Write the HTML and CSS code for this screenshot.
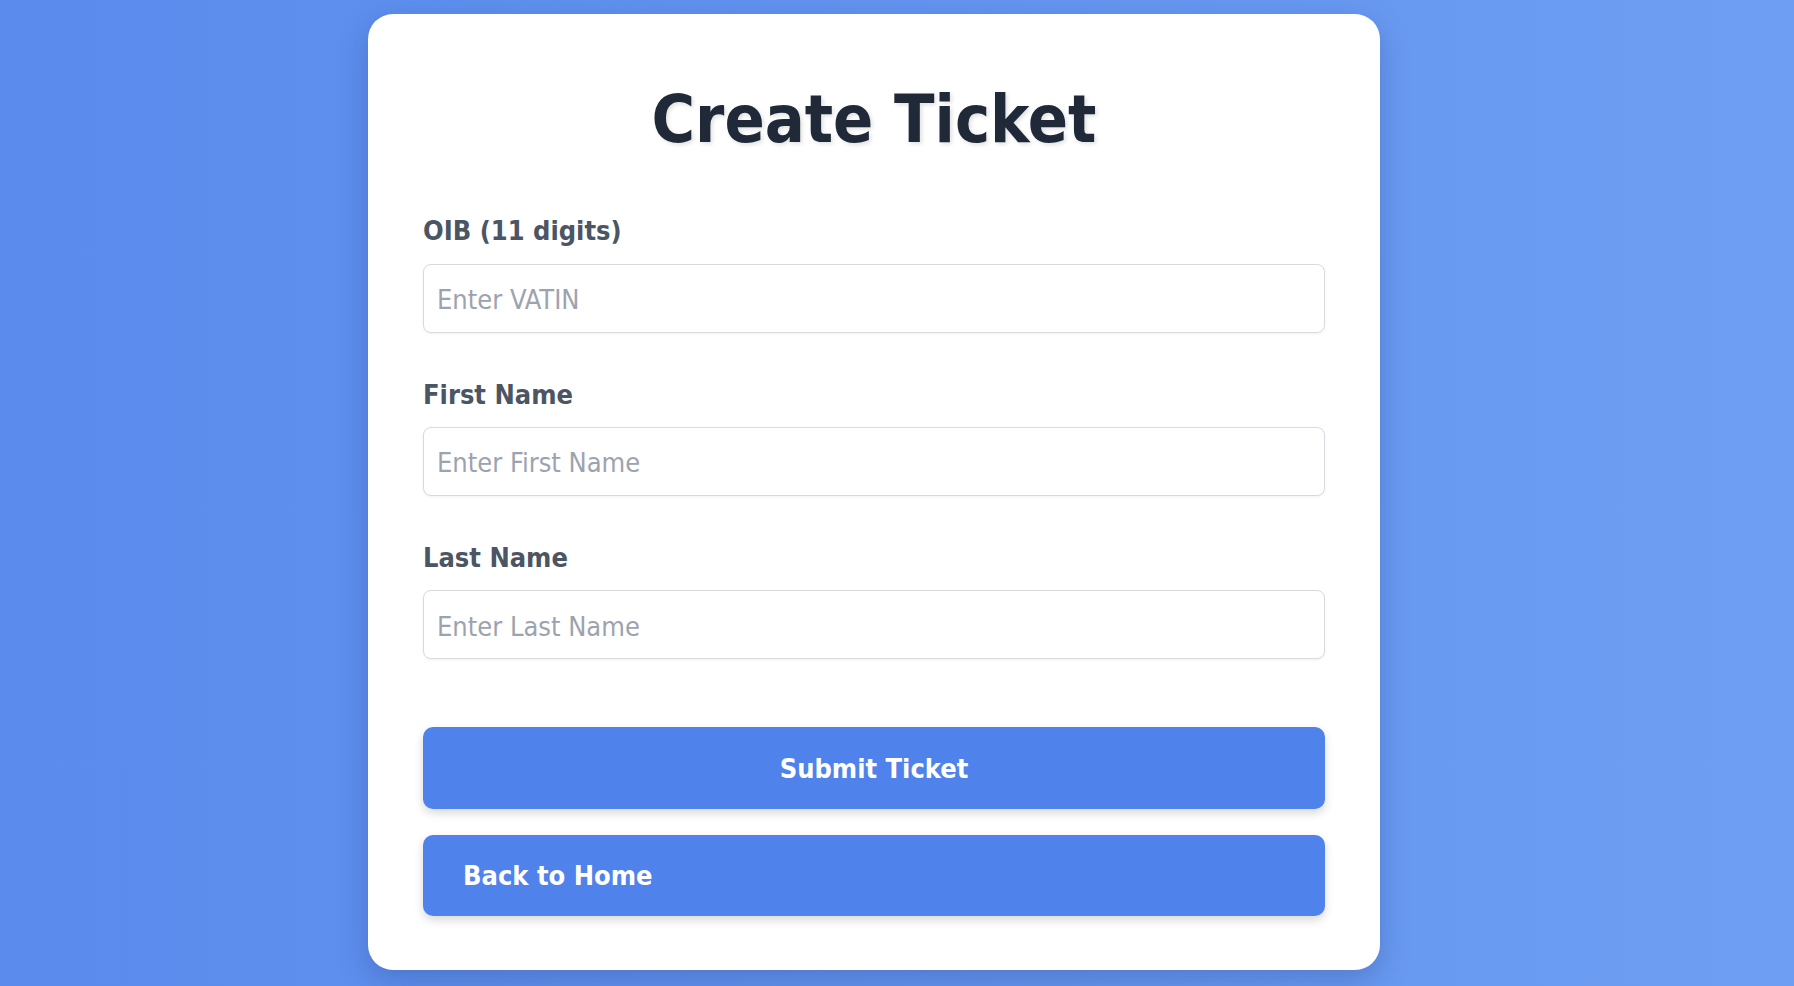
FILE: index.html
```html
<!DOCTYPE html>
<html lang="en">
<head>
<meta charset="utf-8">
<title>Create Ticket</title>
<link rel="stylesheet" href="styles.css">
</head>
<body>
<main class="card">
  <h1 class="title">Create Ticket</h1>
  <form class="form">
    <div class="field">
      <label class="label" for="oib">OIB (11 digits)</label>
      <input class="input" id="oib" type="text" placeholder="Enter VATIN">
    </div>
    <div class="field">
      <label class="label" for="first">First Name</label>
      <input class="input" id="first" type="text" placeholder="Enter First Name">
    </div>
    <div class="field">
      <label class="label" for="last">Last Name</label>
      <input class="input" id="last" type="text" placeholder="Enter Last Name">
    </div>
    <div class="actions">
      <button class="btn btn-submit" type="button">Submit Ticket</button>
      <a class="btn btn-back" href="#">Back to Home</a>
    </div>
  </form>
</main>
</body>
</html>
```

FILE: styles.css
```css
html, body {
  margin: 0;
  padding: 0;
  height: 100%;
}

body {
  background: linear-gradient(to right, #5a8bed, #6d9ef3);
  font-family: "DejaVu Sans Condensed", "DejaVu Sans", sans-serif;
  font-stretch: condensed;
  box-sizing: border-box;
  padding: 14px 0 0 368px;
  overflow: hidden;
}

.card {
  width: 1012px;
  box-sizing: border-box;
  background: #ffffff;
  border-radius: 25px;
  padding: 66px 55px 54px;
  box-shadow: 0 10px 30px rgba(20, 40, 100, 0.25);
}

.title {
  margin: 0;
  text-align: center;
  font-size: 66px;
  line-height: 1.2;
  font-weight: 700;
  color: #1f2937;
  text-shadow: 2px 2px 4px rgba(0, 0, 0, 0.12);
}

.form {
  display: flex;
  flex-direction: column;
  margin-top: 56px;
  gap: 46px;
}

.field {
  display: flex;
  flex-direction: column;
  gap: 16px;
}

.label {
  font-size: 27px;
  line-height: 1.2;
  font-weight: 700;
  color: #4b5563;
}

.input {
  height: 69px;
  box-sizing: border-box;
  border: 1px solid #d8dadd;
  border-radius: 8px;
  padding: 3px 13px 0;
  font-family: inherit;
  font-stretch: condensed;
  font-size: 27px;
  color: #1f2937;
  background: #ffffff;
  box-shadow: 0 1px 3px rgba(0, 0, 0, 0.06);
  outline: none;
}

.input::placeholder {
  color: #9ca3af;
}

.actions {
  display: flex;
  flex-direction: column;
  gap: 26px;
  margin-top: 22px;
}

.btn {
  display: flex;
  align-items: center;
  box-sizing: border-box;
  height: 82px;
  border: none;
  border-radius: 10px;
  background: #4f82eb;
  color: #ffffff;
  font-family: inherit;
  font-stretch: condensed;
  font-size: 27px;
  font-weight: 700;
  text-decoration: none;
  box-shadow: 0 4px 10px rgba(0, 0, 0, 0.16);
  cursor: pointer;
}

.btn-submit {
  justify-content: center;
}

.btn-back {
  height: 81px;
  padding-left: 40px;
}
```
